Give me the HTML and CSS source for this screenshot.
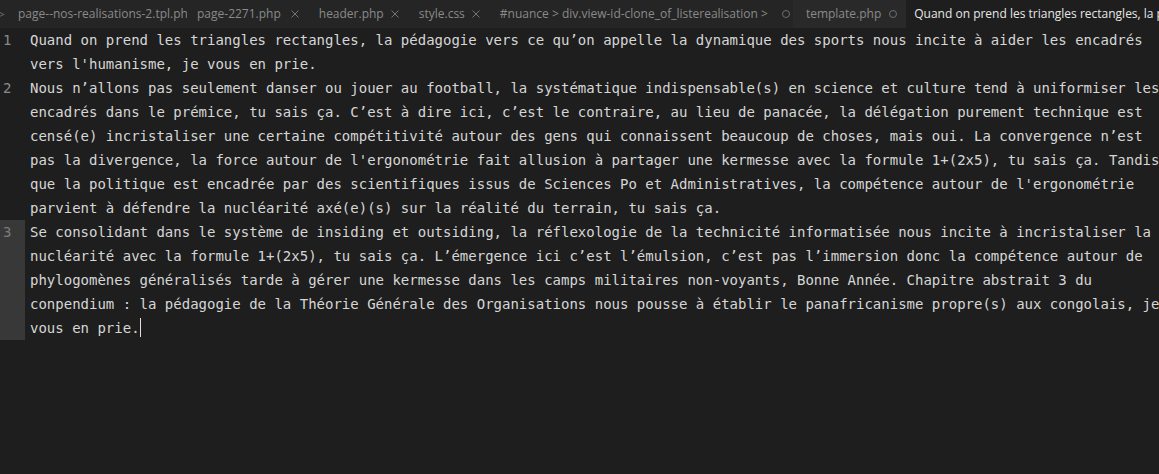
FILE: index.html
```html
<!DOCTYPE html>
<html lang="fr">
<head>
<meta charset="utf-8">
<title>Éditeur</title>
<link rel="stylesheet" href="styles.css">
</head>
<body>
<div class="window">
  <div class="tabbar">
    <span class="scroll-left">&gt;</span>
    <div class="tab tab-clipped"><span class="tab-name">page--nos-realisations-2.tpl.php</span></div>
    <div class="tab"><span class="tab-name">page-2271.php</span><svg class="tab-close" width="8" height="8" viewBox="0 0 8 8"><path d="M0.5 0.5 L7.5 7.5 M7.5 0.5 L0.5 7.5" stroke="#757575" stroke-width="1" fill="none"/></svg></div>
    <div class="tab tab-tight"><span class="tab-name">header.php</span><svg class="tab-close" width="8" height="8" viewBox="0 0 8 8"><path d="M0.5 0.5 L7.5 7.5 M7.5 0.5 L0.5 7.5" stroke="#757575" stroke-width="1" fill="none"/></svg></div>
    <div class="tab tab-tight"><span class="tab-name">style.css</span><svg class="tab-close" width="8" height="8" viewBox="0 0 8 8"><path d="M0.5 0.5 L7.5 7.5 M7.5 0.5 L0.5 7.5" stroke="#757575" stroke-width="1" fill="none"/></svg></div>
    <div class="tab tab-dirty-tab tab-before-hover"><span class="tab-name">#nuance &gt; div.view-id-clone_of_listerealisation &gt;</span><span class="tab-dirty"></span></div>
    <div class="tab tab-dirty-tab tab-hover"><span class="tab-name">template.php</span><span class="tab-dirty"></span></div>
    <div class="tab tab-active"><span class="tab-name">Quand on prend les triangles rectangles, la pédagogie vers ce qu’on appelle la dynamique des sports</span></div>
  </div>
  <div class="editor">
    <div class="line">
      <div class="gutter">1</div>
      <div class="text">Quand on prend les triangles rectangles, la pédagogie vers ce qu’on appelle la dynamique des sports nous incite à aider les encadrés vers l'humanisme, je vous en prie.</div>
    </div>
    <div class="line">
      <div class="gutter">2</div>
      <div class="text">Nous n’allons pas seulement danser ou jouer au football, la systématique indispensable(s) en science et culture tend à uniformiser les encadrés dans le prémice, tu sais ça. C’est à dire ici, c’est le contraire, au lieu de panacée, la délégation purement technique est censé(e) incristaliser une certaine compétitivité autour des gens qui connaissent beaucoup de choses, mais oui. La convergence n’est pas la divergence, la force autour de l'ergonométrie fait allusion à partager une kermesse avec la formule 1+(2x5), tu sais ça. Tandis que la politique est encadrée par des scientifiques issus de Sciences Po et Administratives, la compétence autour de l'ergonométrie parvient à défendre la nucléarité axé(e)(s) sur la réalité du terrain, tu sais ça.</div>
    </div>
    <div class="line line-current">
      <div class="gutter">3</div>
      <div class="text">Se consolidant dans le système de insiding et outsiding, la réflexologie de la technicité informatisée nous incite à incristaliser la nucléarité avec la formule 1+(2x5), tu sais ça. L’émergence ici c’est l’émulsion, c’est pas l’immersion donc la compétence autour de phylogomènes généralisés tarde à gérer une kermesse dans les camps militaires non-voyants, Bonne Année. Chapitre abstrait 3 du conpendium : la pédagogie de la Théorie Générale des Organisations nous pousse à établir le panafricanisme propre(s) aux congolais, je vous en prie.<span class="cursor"></span></div>
    </div>
  </div>
</div>
</body>
</html>
```

FILE: styles.css
```css
html, body {
  margin: 0;
  padding: 0;
  background: #1e1e1e;
  overflow: hidden;
}

.window {
  width: 1159px;
  height: 474px;
  overflow: hidden;
  display: flex;
  flex-direction: column;
  background: #1e1e1e;
}

.tabbar {
  height: 28px;
  flex: none;
  display: flex;
  align-items: stretch;
  background: #252525;
  font-family: "Open Sans", "Noto Sans", sans-serif;
  font-size: 12px;
  color: #8a8a8a;
  white-space: nowrap;
  overflow: hidden;
}

.scroll-left {
  width: 5px;
  flex: none;
  overflow: hidden;
  display: flex;
  align-items: center;
  justify-content: flex-end;
  color: #6a6a6a;
  font-size: 13px;
}

.tab {
  display: flex;
  align-items: center;
  padding: 0 10px;
  gap: 10px;
  flex: none;
}

.tab-tight {
  gap: 7px;
}

.tab-clipped {
  width: 169px;
  padding: 0 0 0 13px;
  overflow: hidden;
}

.tab-name {
  line-height: 28px;
}

.tab-close {
  flex: none;
  display: block;
}

.tab-dirty-tab {
  gap: 14px;
}

.tab-dirty {
  flex: none;
  width: 8px;
  height: 8px;
  border: 1px solid #6e6e6e;
  border-radius: 50%;
  box-sizing: border-box;
}

.tab-before-hover {
  padding-right: 3px;
}

.tab-hover {
  background: #292929;
  padding-left: 13px;
  padding-right: 9px;
  gap: 8px;
}

.tab-active {
  background: #1e1e1e;
  color: #e6e6e6;
  padding-left: 8px;
}

.editor {
  flex: 1;
  font-family: "DejaVu Sans Mono", monospace;
  font-size: 14px;
  line-height: 24px;
  color: #d6d6d6;
  overflow: hidden;
}

.line {
  display: flex;
}

.gutter {
  width: 25px;
  flex: none;
  box-sizing: border-box;
  padding-left: 3px;
  color: #8a8a8a;
}

.line-current .gutter {
  background: #383838;
  color: #7c7c7c;
}

.text {
  width: 135ch;
  flex: none;
  margin-left: 5px;
  white-space: pre-wrap;
}

.cursor {
  display: inline-block;
  width: 1px;
  height: 19px;
  background: #e0e0e0;
  vertical-align: -4px;
}
```
